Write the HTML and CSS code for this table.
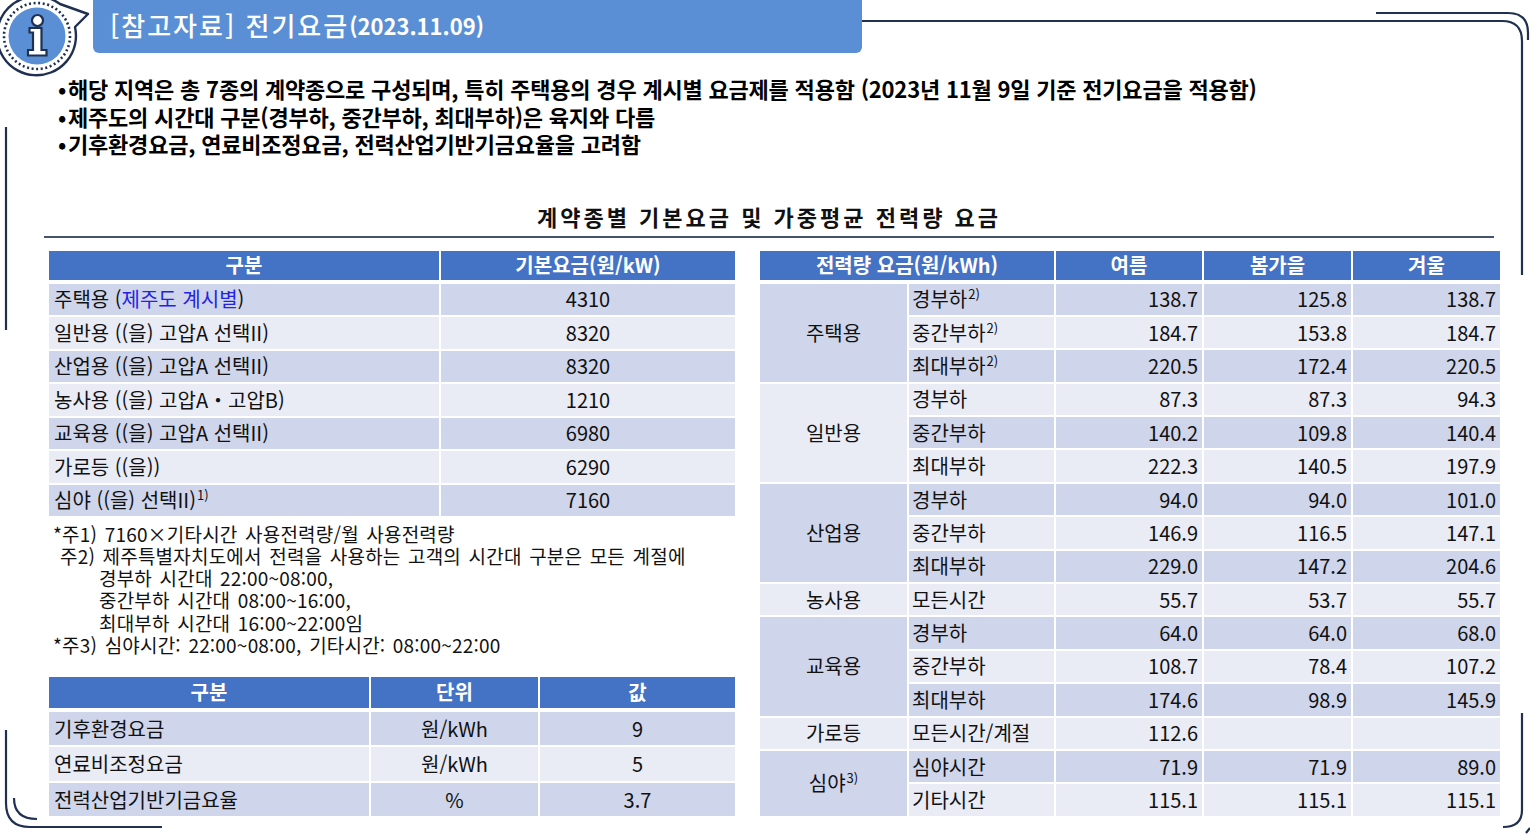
FILE: index.html
```html
<!DOCTYPE html>
<html lang="ko">
<head>
<meta charset="utf-8">
<title>[참고자료] 전기요금</title>
<link rel="stylesheet" href="styles.css">
</head>
<body>
<div class="page">
  <svg class="frame" width="1530" height="834" viewBox="0 0 1530 834" fill="none" stroke="#1F3050" stroke-width="2.2">
    <path d="M862 21 H1502 Q1522 21 1522 41 V275"/>
    <path d="M1376 13 H1508 Q1528 13 1528 33 V40"/>
    <path d="M6 127 V330"/>
    <path d="M6 730 V803 Q6 827 30 827 H162"/>
    <path d="M14 798 Q14 819 37 819"/>
    <path d="M1522 713 V810 Q1522 827 1503 827"/>
    <path d="M1526 833 L1530 828"/>
  </svg>

  <svg class="info-icon" width="100" height="90" viewBox="0 0 100 90">
    <path d="M60 4 L88 14 L75 27 A39.5 39.5 0 1 1 60 4 Z" fill="#fff" stroke="#1F3050" stroke-width="2.4" stroke-linejoin="round"/>
    <circle cx="37" cy="36" r="33" fill="none" stroke="#1F3050" stroke-width="2.6" stroke-dasharray="2 2.6"/>
    <circle cx="37" cy="36" r="28.5" fill="#5B8FD5"/>
    <circle cx="37.5" cy="20.5" r="5.5" fill="#fff" stroke="#1F3050" stroke-width="2.2"/>
    <path d="M29.5 28 H41.5 V50 H46.5 V55.5 H28 V50 H33 V32.5 H29.5 Z" fill="#fff" stroke="#1F3050" stroke-width="2.2" stroke-linejoin="miter"/>
  </svg>

  <header class="titlebar">
    <span class="t-main">[참고자료] 전기요금</span><span class="t-date">(2023.11.09)</span>
  </header>

  <ul class="bullets">
    <li>해당 지역은 총 7종의 계약종으로 구성되며, 특히 주택용의 경우 계시별 요금제를 적용함 (2023년 11월 9일 기준 전기요금을 적용함)</li>
    <li>제주도의 시간대 구분(경부하, 중간부하, 최대부하)은 육지와 다름</li>
    <li>기후환경요금, 연료비조정요금, 전력산업기반기금요율을 고려함</li>
  </ul>

  <h2 class="section-title">계약종별 기본요금 및 가중평균 전력량 요금</h2>

  <div class="cols">
    <div class="left-col">
      <table class="tbl t1">
        <colgroup><col class="c390"><col class="c294"></colgroup>
        <thead>
          <tr><th>구분</th><th>기본요금(원/kW)</th></tr>
        </thead>
        <tbody>
          <tr class="d"><td class="lbl">주택용 (<span class="blue">제주도 계시별</span>)</td><td class="ctr">4310</td></tr>
          <tr class="l"><td class="lbl">일반용 ((을) 고압A 선택II)</td><td class="ctr">8320</td></tr>
          <tr class="d"><td class="lbl">산업용 ((을) 고압A 선택II)</td><td class="ctr">8320</td></tr>
          <tr class="l"><td class="lbl">농사용 ((을) 고압A・고압B)</td><td class="ctr">1210</td></tr>
          <tr class="d"><td class="lbl">교육용 ((을) 고압A 선택II)</td><td class="ctr">6980</td></tr>
          <tr class="l"><td class="lbl">가로등 ((을))</td><td class="ctr">6290</td></tr>
          <tr class="d"><td class="lbl">심야 ((을) 선택II)<sup>1)</sup></td><td class="ctr">7160</td></tr>
        </tbody>
      </table>

      <div class="notes">
        <div class="n1">*주1) 7160×기타시간 사용전력량/월 사용전력량</div>
        <div class="n2">주2) 제주특별자치도에서 전력을 사용하는 고객의 시간대 구분은 모든 계절에</div>
        <div class="n3">경부하 시간대 22:00~08:00,</div>
        <div class="n3">중간부하 시간대 08:00~16:00,</div>
        <div class="n3">최대부하 시간대 16:00~22:00임</div>
        <div class="n1">*주3) 심야시간: 22:00~08:00, 기타시간: 08:00~22:00</div>
      </div>

      <table class="tbl t2">
        <colgroup><col class="c320"><col class="c167"><col class="c195"></colgroup>
        <thead>
          <tr><th>구분</th><th>단위</th><th>값</th></tr>
        </thead>
        <tbody>
          <tr class="d"><td class="lbl">기후환경요금</td><td class="ctr">원/kWh</td><td class="ctr">9</td></tr>
          <tr class="l"><td class="lbl">연료비조정요금</td><td class="ctr">원/kWh</td><td class="ctr">5</td></tr>
          <tr class="d"><td class="lbl">전력산업기반기금요율</td><td class="ctr">%</td><td class="ctr">3.7</td></tr>
        </tbody>
      </table>
    </div>

    <table class="tbl t3">
      <colgroup><col class="c147"><col class="c145"><col class="c146"><col class="c147"><col class="c147"></colgroup>
      <thead>
        <tr><th colspan="2">전력량 요금(원/kWh)</th><th>여름</th><th>봄가을</th><th>겨울</th></tr>
      </thead>
      <tbody>
        <tr class="d"><td class="grp gd" rowspan="3">주택용</td><td class="sub">경부하<sup>2)</sup></td><td class="num">138.7</td><td class="num">125.8</td><td class="num">138.7</td></tr>
        <tr class="l"><td class="sub">중간부하<sup>2)</sup></td><td class="num">184.7</td><td class="num">153.8</td><td class="num">184.7</td></tr>
        <tr class="d"><td class="sub">최대부하<sup>2)</sup></td><td class="num">220.5</td><td class="num">172.4</td><td class="num">220.5</td></tr>
        <tr class="l"><td class="grp gl" rowspan="3">일반용</td><td class="sub">경부하</td><td class="num">87.3</td><td class="num">87.3</td><td class="num">94.3</td></tr>
        <tr class="d"><td class="sub">중간부하</td><td class="num">140.2</td><td class="num">109.8</td><td class="num">140.4</td></tr>
        <tr class="l"><td class="sub">최대부하</td><td class="num">222.3</td><td class="num">140.5</td><td class="num">197.9</td></tr>
        <tr class="d"><td class="grp gd" rowspan="3">산업용</td><td class="sub">경부하</td><td class="num">94.0</td><td class="num">94.0</td><td class="num">101.0</td></tr>
        <tr class="l"><td class="sub">중간부하</td><td class="num">146.9</td><td class="num">116.5</td><td class="num">147.1</td></tr>
        <tr class="d"><td class="sub">최대부하</td><td class="num">229.0</td><td class="num">147.2</td><td class="num">204.6</td></tr>
        <tr class="l"><td class="grp gl">농사용</td><td class="sub">모든시간</td><td class="num">55.7</td><td class="num">53.7</td><td class="num">55.7</td></tr>
        <tr class="d"><td class="grp gd" rowspan="3">교육용</td><td class="sub">경부하</td><td class="num">64.0</td><td class="num">64.0</td><td class="num">68.0</td></tr>
        <tr class="l"><td class="sub">중간부하</td><td class="num">108.7</td><td class="num">78.4</td><td class="num">107.2</td></tr>
        <tr class="d"><td class="sub">최대부하</td><td class="num">174.6</td><td class="num">98.9</td><td class="num">145.9</td></tr>
        <tr class="l"><td class="grp gl">가로등</td><td class="sub">모든시간/계절</td><td class="num">112.6</td><td class="num"></td><td class="num"></td></tr>
        <tr class="d"><td class="grp gd" rowspan="2">심야<sup>3)</sup></td><td class="sub">심야시간</td><td class="num">71.9</td><td class="num">71.9</td><td class="num">89.0</td></tr>
        <tr class="l"><td class="sub">기타시간</td><td class="num">115.1</td><td class="num">115.1</td><td class="num">115.1</td></tr>
      </tbody>
    </table>
  </div>
</div>
</body>
</html>
```

FILE: styles.css
```css
* { box-sizing: border-box; }
html, body { margin: 0; padding: 0; background: #fff; }
body {
  font-family: "Noto Sans CJK KR", "Noto Sans", sans-serif;
  color: #111;
}
.page {
  position: relative;
  width: 1530px;
  height: 834px;
  overflow: hidden;
}
.frame { position: absolute; left: 0; top: 0; pointer-events: none; }
.info-icon { position: absolute; left: 0; top: 0; }

.titlebar {
  margin-left: 93px;
  width: 769px;
  height: 53px;
  background: #5B8FD5;
  border-radius: 0 0 6px 6px;
  display: flex;
  align-items: center;
  padding: 0 0 4px 17px;
  color: #fff;
}
.t-main { font-size: 26px; font-weight: 500; letter-spacing: 2px; line-height: 1; }
.t-date { font-size: 22px; font-weight: 700; line-height: 1; }

.bullets {
  list-style: none;
  margin: 22px 0 0 58px;
  padding: 0;
  font-size: 22px;
  font-weight: 700;
  line-height: 27.5px;
  letter-spacing: -0.2px;
  color: #000;
}
.bullets li { display: flex; }
.bullets li::before { content: "•"; width: 10px; flex: none; letter-spacing: 0; }

.section-title {
  margin: 43px 36px 0 44px;
  padding: 0 0 5px;
  text-align: center;
  font-size: 22px;
  font-weight: 700;
  letter-spacing: 3px;
  line-height: 30px;
  color: #111;
  border-bottom: 2px solid #44546A;
}

.cols {
  display: flex;
  align-items: flex-start;
  gap: 21px;
  margin: 11px 0 0 47px;
}
.left-col { width: 690px; }

.tbl {
  border-collapse: separate;
  border-spacing: 2px;
  table-layout: fixed;
  font-size: 20px;
  color: #111;
}
.t1 { width: 690px; }
.t2 { width: 690px; margin-top: 18.5px; }
.t3 { width: 744px; }
.c390 { width: 390px; } .c294 { width: 294px; }
.c320 { width: 320px; } .c167 { width: 167px; } .c195 { width: 195px; }
.c147 { width: 147px; } .c145 { width: 145px; } .c146 { width: 146px; }

.tbl th {
  background: #4472C4;
  color: #fff;
  font-weight: 700;
  height: 31px;
  padding: 0;
  border-bottom: 2px solid #fff;
  line-height: 1;
  text-align: center;
  vertical-align: middle;
}
.t2 th { height: 33px; }
.tbl td {
  height: 31.5px;
  padding: 0;
  line-height: 1.2;
  vertical-align: middle;
  white-space: nowrap;
}
.t2 td { height: 33.5px; }
.t3 td { height: 31.4px; }

.tbl tr.d > td { background: #CFD5EA; }
.tbl tr.l > td { background: #E9EBF5; }
.tbl tr > td.gd { background: #CFD5EA; }
.tbl tr > td.gl { background: #E9EBF5; }

.lbl { text-align: left; padding-left: 5px !important; }
.ctr { text-align: center; }
.num { text-align: right; padding-right: 4px !important; }
.sub { text-align: left; padding-left: 3px !important; }
.grp { text-align: center; }
.blue { color: #2323E6; }

sup {
  font-size: 13px;
  line-height: 0;
  vertical-align: 8px;
  margin-left: 1px;
}

.notes {
  margin: 4.5px 0 0 6px;
  font-size: 19px;
  line-height: 22.3px;
  letter-spacing: 0.2px;
  word-spacing: 2px;
  color: #111;
}
.n2 { padding-left: 7px; }
.n3 { padding-left: 46px; }
```
